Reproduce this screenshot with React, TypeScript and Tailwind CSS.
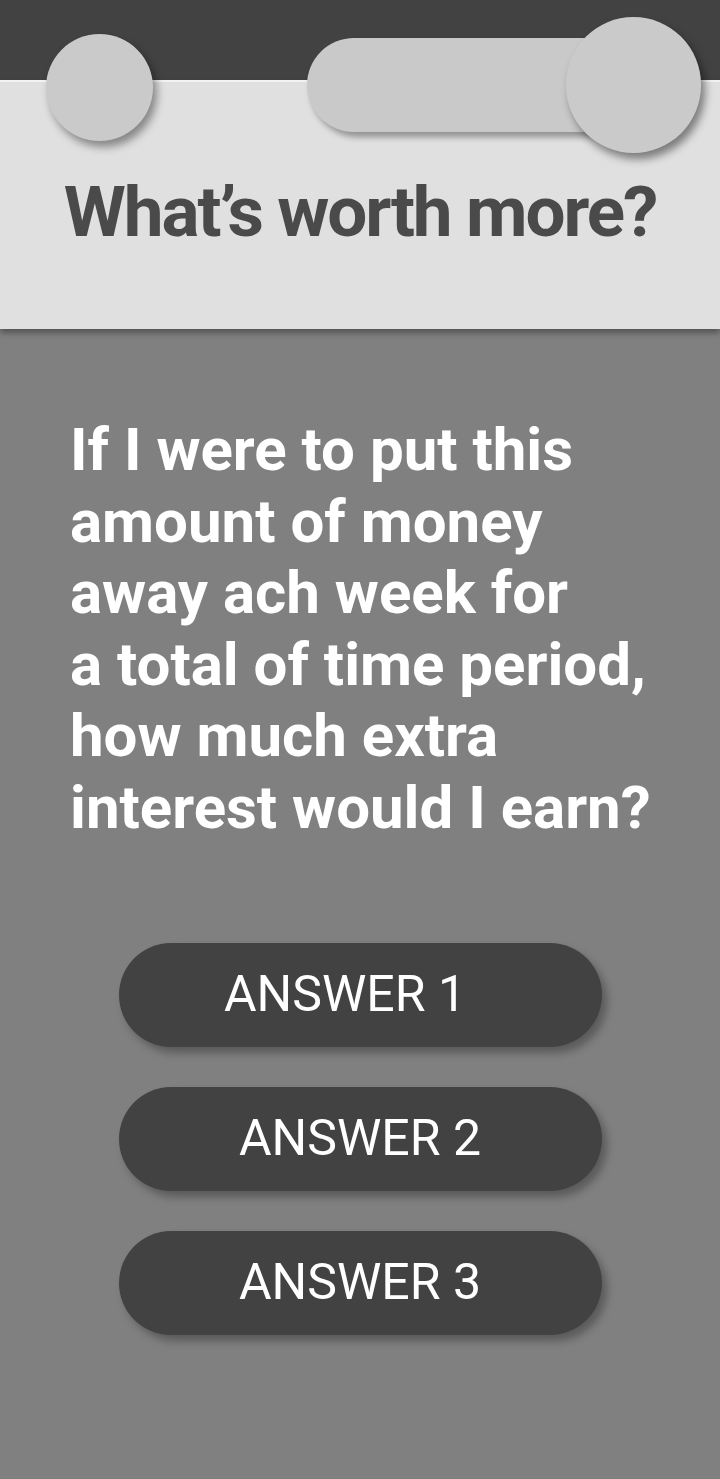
const answers = [
  { label: "ANSWER 1", shift: "pr-[30px]" },
  { label: "ANSWER 2", shift: "" },
  { label: "ANSWER 3", shift: "" },
];

export default function App() {
  return (
    <main className="min-h-[1479px] w-[720px] bg-[#808080] font-['Roboto',sans-serif] flex flex-col">
      <header className="relative">
        <div className="h-[80px] bg-[#424242]" />
        <div className="h-[249px] bg-[#e0e0e0] border-t-2 border-[#f2f2f2] shadow-[0_4px_6px_rgba(0,0,0,0.35)] flex justify-center pt-[94px]">
          <h1 className="text-[71px] leading-none font-bold text-[#4a4a4a] tracking-[-2.1px]">
            What’s worth more?
          </h1>
        </div>

        {/* toggles sitting over the bar edge */}
        <div className="absolute left-[46px] top-[34px] w-[107px] h-[107px] rounded-full bg-[#cacaca] shadow-[4px_6px_8px_rgba(0,0,0,0.4)]" />
        <div className="absolute left-[307px] top-[38px] w-[340px] h-[94px] rounded-full bg-[#c9c9c9] shadow-[4px_5px_6px_rgba(0,0,0,0.35)]" />
        <div className="absolute left-[566px] top-[17px] w-[135px] h-[136px] rounded-full bg-[#cacaca] shadow-[4px_6px_8px_rgba(0,0,0,0.45)]" />
      </header>

      <section className="pl-[70px] pt-[85px]">
        <p className="text-[60px] leading-[71.6px] font-bold text-white">
          If I were to put this
          <br />
          amount of money
          <br />
          away ach week for
          <br />
          a total of time period,
          <br />
          how much extra
          <br />
          interest would I earn?
        </p>
      </section>

      <div className="flex flex-col items-center gap-[40px] pt-[99px]">
        {answers.map((a) => (
          <button
            key={a.label}
            className={`w-[483px] h-[104px] rounded-full bg-[#424242] text-white text-[50px] shadow-[5px_6px_8px_rgba(0,0,0,0.3)] ${a.shift}`}
          >
            {a.label}
          </button>
        ))}
      </div>
    </main>
  );
}
